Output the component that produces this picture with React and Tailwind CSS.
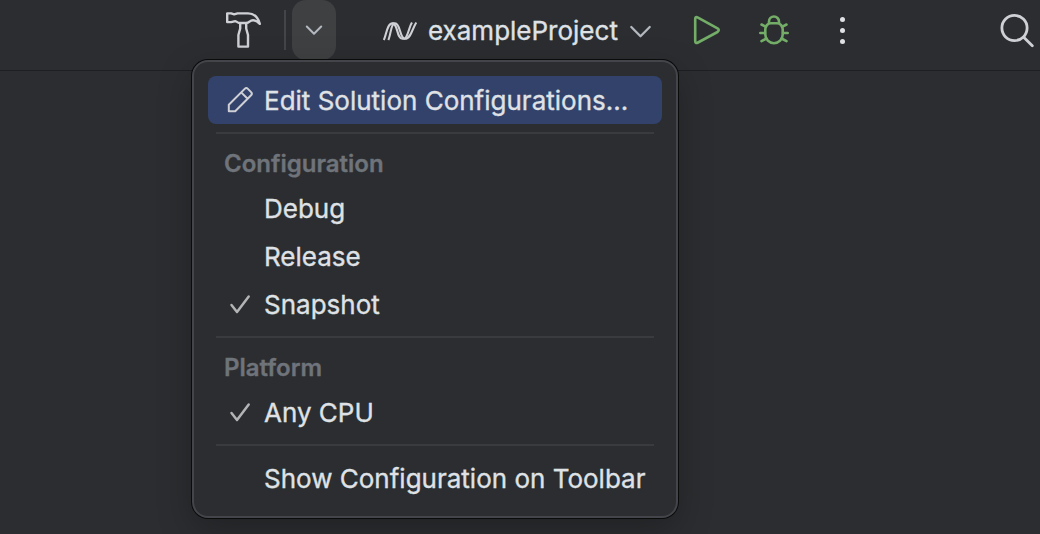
import React from "react";

function HammerIcon() {
  return (
    <svg className="h-10 w-10 shrink-0" viewBox="0 0 40 40" fill="none" stroke="#ced0d6" strokeWidth="2.4" strokeLinejoin="round">
      <path d="M4.2 3.4H8.2L11.2 4.4L14.5 3.4H25C31.5 3.4 35 7.5 36.8 13.8C33 10.2 29.5 9.2 26.5 11.6C25.3 12.8 24 13 23 13H16.2C14.7 13 14 11.4 12.2 11.1L8.2 12.1H4.2Z" />
      <path d="M17.2 13V18.5L15.4 25V36.6H25V25L23.2 18.5V13" />
    </svg>
  );
}

function ChevronIcon({ className, d }) {
  return (
    <svg className={className} viewBox="0 0 20 12" fill="none" stroke="#b4b8bf" strokeWidth="2" strokeLinecap="round" strokeLinejoin="round">
      <path d={d} />
    </svg>
  );
}

function NetIcon() {
  return (
    <svg className="h-5 w-9 shrink-0" viewBox="0 0 36 20" fill="none" stroke="#ced0d6" strokeWidth="2.1">
      <path d="M1.8 19C4.5 14 4.8 2.4 10.5 2.4H13C18.8 2.4 17.5 17.8 23 17.8C29 17.8 30.5 7 34.3 1.5" />
      <path d="M6.3 19C8.8 14 8.8 4 12 2.6M10.5 2.4C16 2.4 14.5 17.8 20.5 17.8H23M22.8 17.6C26 15.5 27 6 30 1.5" />
    </svg>
  );
}

function BugIcon() {
  return (
    <svg className="h-8 w-8 shrink-0" viewBox="0 0 32 32" fill="none" stroke="#73ad67" strokeWidth="2.6" strokeLinecap="round" strokeLinejoin="round">
      <path d="M7.3 15A5.7 5.7 0 0 1 13 9.3H19A5.7 5.7 0 0 1 24.7 15V20.5A8.7 8.7 0 0 1 7.3 20.5Z" />
      <path d="M11 9V7.5A5 5 0 0 1 21 7.5V9M3.5 10.5L8 12.8M28.5 10.5L24 12.8M2.3 19H7M29.7 19H25M3.5 27.2L8.5 24.5M28.5 27.2L23.5 24.5" />
    </svg>
  );
}

function CheckIcon() {
  return (
    <svg className="ml-[3px] h-6 w-6" viewBox="0 0 24 24" fill="none" stroke="#b3b4b6" strokeWidth="2.5" strokeLinecap="round" strokeLinejoin="round">
      <path d="M2.5 13L8 20L19.7 4.5" />
    </svg>
  );
}

function PencilIcon() {
  return (
    <svg className="h-7 w-7" viewBox="0 0 28 28" fill="none" stroke="#ced0d6" strokeWidth="2" strokeLinejoin="round">
      <path d="M2.8 25.2V18.8L18.7 2.9Q20.3 1.3 21.9 2.9L25.1 6.1Q26.7 7.7 25.1 9.3L9.2 25.2ZM15.2 6.4L21.6 12.8" />
    </svg>
  );
}

function MenuItem({ icon, children, selected = false }) {
  return (
    <div className={`flex h-12 items-center rounded-lg pl-4 ${selected ? "bg-[#33426b]" : ""}`}>
      <div className="flex w-10 shrink-0 items-center pl-0.5">{icon}</div>
      <div className="pt-0.5 whitespace-nowrap text-[#dfe1e5]">{children}</div>
    </div>
  );
}

function Separator() {
  return <div className="mx-2 mt-2 mb-2 h-0.5 bg-[#3a3b3f]" />;
}

function SectionLabel({ children }) {
  return (
    <div className="flex h-[42px] items-center pt-0.5 pl-4 text-[24px] font-semibold text-[#6f737a]">{children}</div>
  );
}

export default function App() {
  return (
    <div className="relative h-[534px] w-[1040px] overflow-hidden bg-[#2b2d30] font-['Inter',sans-serif] text-[26px] leading-8 [-webkit-text-stroke:0.35px]">
      <header className="flex h-[71px] items-start border-b border-[#1e1f22] pl-[223px]">
        <div className="flex h-[60px] items-center">
          <HammerIcon />
          <div className="ml-[21px] h-10 w-0.5 bg-[#43454a]" />
          <div className="ml-1.5 flex h-[60px] w-11 items-center justify-center rounded-[14px] bg-[#3f4042]">
            <ChevronIcon className="h-3 w-5" d="M2.8 2.5L10 9.7L17.2 2.5" />
          </div>
          <div className="ml-[46px] flex items-center pt-0.5">
            <NetIcon />
            <span className="ml-2.5 w-[190px] whitespace-nowrap text-[#dfe1e5]">exampleProject</span>
            <ChevronIcon className="mt-0.5 ml-[11px] h-3.5 w-[23px]" d="M2 1.7L10 9.7L18 1.7" />
          </div>
          <svg className="ml-[39px] h-8 w-8 shrink-0" viewBox="0 0 32 32" fill="none" stroke="#73ad67" strokeWidth="2.6" strokeLinejoin="round">
            <path d="M4.2 5V27Q4.2 30 7 28.5L26.5 18Q29 16 26.5 14.4L7 3.6Q4.2 2.2 4.2 5Z" />
          </svg>
          <div className="ml-[35px]">
            <BugIcon />
          </div>
          <div className="ml-[49.5px] flex flex-col gap-1.5">
            <i className="h-[5px] w-[5px] rounded-full bg-[#dfe1e5]" />
            <i className="h-[5px] w-[5px] rounded-full bg-[#dfe1e5]" />
            <i className="h-[5px] w-[5px] rounded-full bg-[#dfe1e5]" />
          </div>
          <svg className="ml-[153px] h-9 w-9 shrink-0" viewBox="0 0 36 36" fill="none" stroke="#ced0d6" strokeWidth="2.8" strokeLinecap="round">
            <circle cx="16.5" cy="16" r="12.6" />
            <path d="M25.7 25.2L34.3 33.8" />
          </svg>
        </div>
      </header>
      <div className="absolute top-[60px] left-[192px] h-[458px] w-[486px] rounded-2xl border-2 border-[#43454a] bg-[#2b2d30] p-3.5 shadow-[0_0_0_1px_#0b0b0c,0_12px_34px_rgba(0,0,0,0.25)]">
        <MenuItem icon={<PencilIcon />} selected>Edit Solution Configurations...</MenuItem>
        <Separator />
        <SectionLabel>Configuration</SectionLabel>
        <MenuItem>Debug</MenuItem>
        <MenuItem>Release</MenuItem>
        <MenuItem icon={<CheckIcon />}>Snapshot</MenuItem>
        <Separator />
        <SectionLabel>Platform</SectionLabel>
        <MenuItem icon={<CheckIcon />}>Any CPU</MenuItem>
        <Separator />
        <MenuItem>Show Configuration on Toolbar</MenuItem>
      </div>
    </div>
  );
}
